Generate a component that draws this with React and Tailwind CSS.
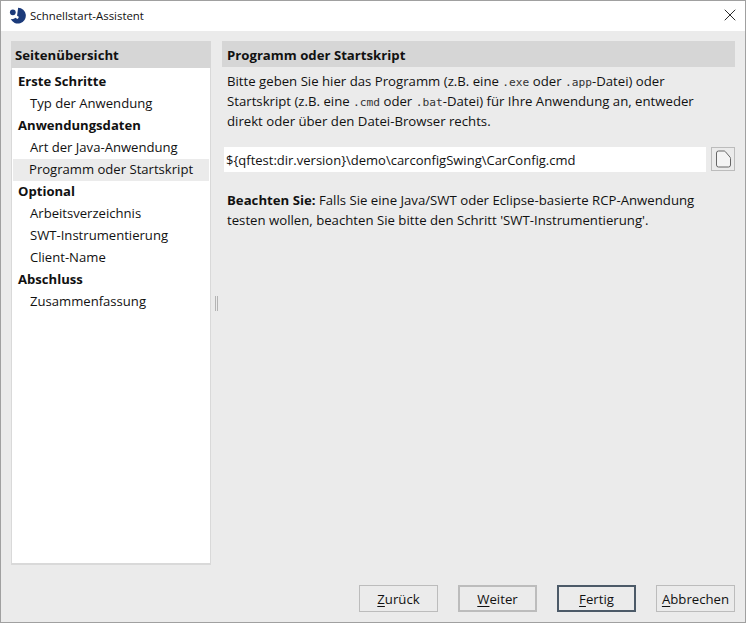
import { X } from 'lucide-react'

const pages = [
  { label: 'Erste Schritte', bold: true },
  { label: 'Typ der Anwendung' },
  { label: 'Anwendungsdaten', bold: true },
  { label: 'Art der Java-Anwendung' },
  { label: 'Programm oder Startskript', selected: true },
  { label: 'Optional', bold: true },
  { label: 'Arbeitsverzeichnis' },
  { label: 'SWT-Instrumentierung' },
  { label: 'Client-Name' },
  { label: 'Abschluss', bold: true },
  { label: 'Zusammenfassung' },
]

function Code({ children }) {
  return <span className="font-['DejaVu_Sans_Mono',monospace] text-[11.2px] leading-none text-[#333]">{children}</span>
}

function PageRow({ label, bold, selected }) {
  const indent = bold ? 'pl-[5px] font-bold' : selected ? 'pl-[16px] bg-[#ebebeb]' : 'pl-[17px]'
  return <div className={`h-[22px] flex items-center ${indent}`}>{label}</div>
}

function WizardButton({ hotkey, rest, className = 'border border-[#bcbcbc]' }) {
  return (
    <button className={`w-[79px] h-[27px] flex items-center justify-center bg-[#ebebeb] pt-[2px] ${className}`}>
      <span className="underline underline-offset-2">{hotkey}</span>
      {rest}
    </button>
  )
}

export default function App() {
  return (
    <div className="w-[746px] h-[623px] flex flex-col bg-[#ebebeb] border border-[#a0a0a0] font-['Open_Sans',sans-serif] text-[13.2px] text-[#111]">
      {/* Titelleiste */}
      <div className="h-[30px] shrink-0 bg-white flex items-center pl-[8px] pr-[5px]">
        <svg width="17" height="17" viewBox="0 0 16 16" className="shrink-0 -mt-[1px]">
          <path d="M8.6 0.6A7.5 7.5 0 1 1 1.6 11.4C3.4 11.8 5 11.2 6 10.2L8 11.4C8.8 10.8 9.2 10 9.2 9.2L7.6 8.2Z" fill="#1b3a7a" />
          <circle cx="3.6" cy="5" r="2.7" fill="#1b3a7a" />
        </svg>
        <span className="ml-[4px] flex-1 text-[11.4px] -mt-[1px]">Schnellstart-Assistent</span>
        <X size={20} strokeWidth={1} className="text-black -mt-[2px]" />
      </div>

      {/* Inhalt */}
      <div className="flex-1 flex min-h-0 pt-[10px] pl-[10px] pr-[10px]">
        <div className="w-[200px] h-[524px] shrink-0 flex flex-col bg-[#d9d9d9]">
          <div className="h-[27px] shrink-0 flex items-center pl-[4px] pt-[2px] font-bold bg-[#d6d6d6]">Seitenübersicht</div>
          <div className="flex-1 mx-px mb-[2px] bg-white pt-[3px] px-px text-[13.1px]">
            {pages.map((p) => (
              <PageRow key={p.label} {...p} />
            ))}
          </div>
        </div>

        {/* Teiler */}
        <div className="w-[11px] shrink-0 h-[524px] flex items-center justify-center">
          <div className="w-[3px] h-[15px] border-x border-[#b4b4b4]" />
        </div>

        <div className="flex-1 min-w-0 flex flex-col">
          <div className="h-[26px] shrink-0 bg-[#d6d6d6] flex items-center pl-[5px] pt-[4px] font-bold">
            Programm oder Startskript
          </div>
          <div className="pl-[5px] pt-[4px] leading-[20px]">
            <p>
              Bitte geben Sie hier das Programm (z.B. eine <Code>.exe</Code> oder <Code>.app</Code>-Datei) oder
              <br />
              Startskript (z.B. eine <Code>.cmd</Code> oder <Code>.bat</Code>-Datei) für Ihre Anwendung an, entweder
              <br />
              direkt oder über den Datei-Browser rechts.
            </p>
          </div>
          <div className="flex items-start mt-[16px] pl-[2px] gap-[5px]">
            <div className="w-[482px] h-[25px] bg-white flex items-center pl-[2px] pt-[2px] text-[13px]">
              {'${qftest:dir.version}\\demo\\carconfigSwing\\CarConfig.cmd'}
            </div>
            <button className="w-[24px] h-[24px] border border-[#bcbcbc] flex items-center justify-center">
              <svg width="17" height="18" viewBox="0 0 16 18" fill="#f4f4f4" stroke="#666" strokeWidth="1">
                <path d="M3 1H8.5C9 1 9.4 1.2 9.8 1.6L14.4 7C14.8 7.4 15 7.9 15 8.4V15A2 2 0 0 1 13 17H3A2 2 0 0 1 1 15V3A2 2 0 0 1 3 1Z" />
              </svg>
            </button>
          </div>
          <p className="pl-[5px] mt-[18px] leading-[20px]">
            <span className="font-bold">Beachten Sie:</span> Falls Sie eine Java/SWT oder Eclipse-basierte RCP-Anwendung
            <br />
            testen wollen, beachten Sie bitte den Schritt 'SWT-Instrumentierung'.
          </p>
        </div>
      </div>

      {/* Schaltflächen */}
      <div className="h-[57px] shrink-0 flex justify-end items-start pt-[20px] pr-[10px] gap-[20px]">
        <WizardButton hotkey="Z" rest="urück" />
        <WizardButton hotkey="W" rest="eiter" className="border-2 border-[#bcbcbc]" />
        <WizardButton hotkey="F" rest="ertig" className="border-2 border-[#4c5a68]" />
        <WizardButton hotkey="A" rest="bbrechen" />
      </div>
    </div>
  )
}
